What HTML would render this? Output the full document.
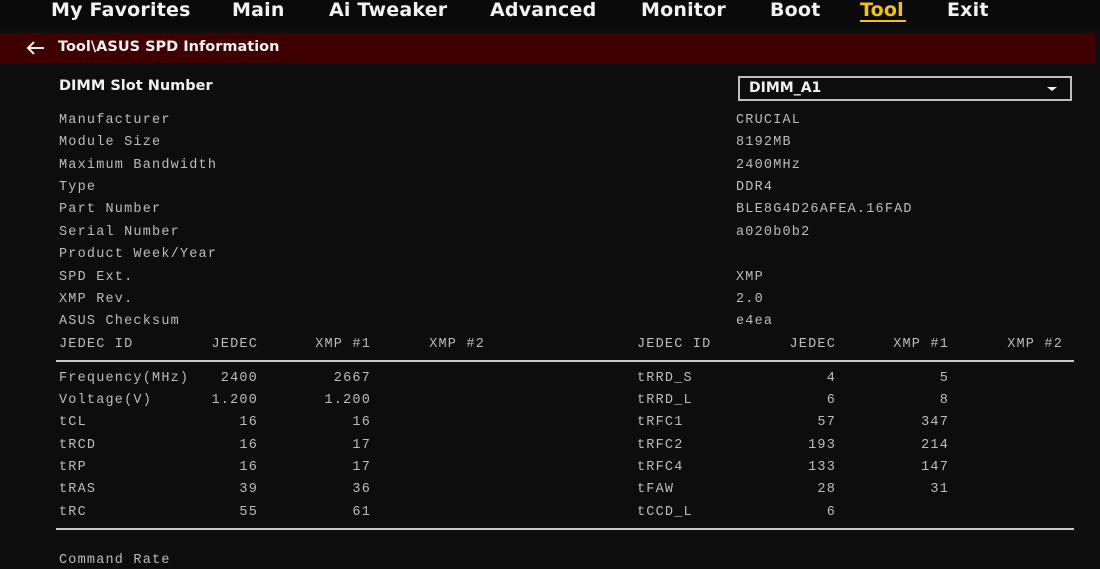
<!DOCTYPE html>
<html><head><meta charset="utf-8"><style>
html,body{margin:0;padding:0;}
body{width:1100px;height:569px;background:#0d0d0d;position:relative;overflow:hidden;font-family:"DejaVu Sans","Liberation Sans",sans-serif;}
.nav{position:absolute;left:0;top:0;width:1100px;height:27px;background:#0a0a0a;}
.nav span{position:absolute;top:-1px;font-size:19px;color:#f2f2f2;font-weight:600;letter-spacing:0.2px;white-space:nowrap;}
.bar{position:absolute;left:0;top:33px;width:1096px;height:30px;background:#3f0000;}
.bar .t{position:absolute;left:58px;top:6px;font-size:14.5px;color:#f0f0f0;font-weight:600;}
.m{position:absolute;font-family:"Liberation Mono",monospace;font-size:13.5px;letter-spacing:1.2px;color:#bcbcbc;white-space:nowrap;line-height:16px;margin-top:1px;}
.r{text-align:right;}
.line{position:absolute;height:2px;background:#c8c8c8;}
</style></head><body>
<div class="nav">
<span style="left:51px">My Favorites</span>
<span style="left:232px">Main</span>
<span style="left:329px">Ai Tweaker</span>
<span style="left:490px">Advanced</span>
<span style="left:641px">Monitor</span>
<span style="left:770px">Boot</span>
<span style="left:860px;color:#f5c400">Tool</span>
<span style="left:947px">Exit</span>
<div style="position:absolute;left:860px;top:20px;width:46px;height:2px;background:#f5c400"></div>
</div>
<div class="bar">
<svg style="position:absolute;left:25px;top:8px" width="20" height="14" viewBox="0 0 20 14"><path d="M19 7H3M9 1L3 7l6 6" stroke="#f0f0f0" stroke-width="2" fill="none"/></svg>
<div class="t">Tool\ASUS SPD Information</div>
</div>
<div style="position:absolute;left:59px;top:78px;font-size:14.5px;color:#f0f0f0;font-weight:600">DIMM Slot Number</div>
<div style="position:absolute;left:738px;top:76px;width:330px;height:21px;border:2px solid #bfbfbf;">
<div style="position:absolute;left:9px;top:2px;font-size:14px;color:#f0f0f0;font-weight:600">DIMM_A1</div>
<div style="position:absolute;right:13px;top:9px;width:0;height:0;border-left:5px solid transparent;border-right:5px solid transparent;border-top:4px solid #f0f0f0"></div>
</div>
<div class="m" style="left:59px;top:112px">Manufacturer</div><div class="m" style="left:736px;top:112px">CRUCIAL</div>
<div class="m" style="left:59px;top:134px">Module Size</div><div class="m" style="left:736px;top:134px">8192MB</div>
<div class="m" style="left:59px;top:157px">Maximum Bandwidth</div><div class="m" style="left:736px;top:157px">2400MHz</div>
<div class="m" style="left:59px;top:179px">Type</div><div class="m" style="left:736px;top:179px">DDR4</div>
<div class="m" style="left:59px;top:201px">Part Number</div><div class="m" style="left:736px;top:201px">BLE8G4D26AFEA.16FAD</div>
<div class="m" style="left:59px;top:224px">Serial Number</div><div class="m" style="left:736px;top:224px">a020b0b2</div>
<div class="m" style="left:59px;top:246px">Product Week/Year</div>
<div class="m" style="left:59px;top:269px">SPD Ext.</div><div class="m" style="left:736px;top:269px">XMP</div>
<div class="m" style="left:59px;top:291px">XMP Rev.</div><div class="m" style="left:736px;top:291px">2.0</div>
<div class="m" style="left:59px;top:313px">ASUS Checksum</div><div class="m" style="left:736px;top:313px">e4ea</div>

<div class="m" style="left:59px;top:336px">JEDEC ID</div>
<div class="m r" style="left:158px;width:100px;top:336px">JEDEC</div>
<div class="m r" style="left:271px;width:100px;top:336px">XMP #1</div>
<div class="m r" style="left:385px;width:100px;top:336px">XMP #2</div>
<div class="m" style="left:637px;top:336px">JEDEC ID</div>
<div class="m r" style="left:736px;width:100px;top:336px">JEDEC</div>
<div class="m r" style="left:849px;width:100px;top:336px">XMP #1</div>
<div class="m r" style="left:963px;width:100px;top:336px">XMP #2</div>
<div class="line" style="left:56px;top:360px;width:1018px"></div>

<div class="m" style="left:59px;top:370px">Frequency(MHz)</div><div class="m r" style="left:158px;width:100px;top:370px">2400</div><div class="m r" style="left:271px;width:100px;top:370px">2667</div>
<div class="m" style="left:59px;top:392px">Voltage(V)</div><div class="m r" style="left:158px;width:100px;top:392px">1.200</div><div class="m r" style="left:271px;width:100px;top:392px">1.200</div>
<div class="m" style="left:59px;top:414px">tCL</div><div class="m r" style="left:158px;width:100px;top:414px">16</div><div class="m r" style="left:271px;width:100px;top:414px">16</div>
<div class="m" style="left:59px;top:437px">tRCD</div><div class="m r" style="left:158px;width:100px;top:437px">16</div><div class="m r" style="left:271px;width:100px;top:437px">17</div>
<div class="m" style="left:59px;top:459px">tRP</div><div class="m r" style="left:158px;width:100px;top:459px">16</div><div class="m r" style="left:271px;width:100px;top:459px">17</div>
<div class="m" style="left:59px;top:481px">tRAS</div><div class="m r" style="left:158px;width:100px;top:481px">39</div><div class="m r" style="left:271px;width:100px;top:481px">36</div>
<div class="m" style="left:59px;top:504px">tRC</div><div class="m r" style="left:158px;width:100px;top:504px">55</div><div class="m r" style="left:271px;width:100px;top:504px">61</div>

<div class="m" style="left:637px;top:370px">tRRD_S</div><div class="m r" style="left:736px;width:100px;top:370px">4</div><div class="m r" style="left:849px;width:100px;top:370px">5</div>
<div class="m" style="left:637px;top:392px">tRRD_L</div><div class="m r" style="left:736px;width:100px;top:392px">6</div><div class="m r" style="left:849px;width:100px;top:392px">8</div>
<div class="m" style="left:637px;top:414px">tRFC1</div><div class="m r" style="left:736px;width:100px;top:414px">57</div><div class="m r" style="left:849px;width:100px;top:414px">347</div>
<div class="m" style="left:637px;top:437px">tRFC2</div><div class="m r" style="left:736px;width:100px;top:437px">193</div><div class="m r" style="left:849px;width:100px;top:437px">214</div>
<div class="m" style="left:637px;top:459px">tRFC4</div><div class="m r" style="left:736px;width:100px;top:459px">133</div><div class="m r" style="left:849px;width:100px;top:459px">147</div>
<div class="m" style="left:637px;top:481px">tFAW</div><div class="m r" style="left:736px;width:100px;top:481px">28</div><div class="m r" style="left:849px;width:100px;top:481px">31</div>
<div class="m" style="left:637px;top:504px">tCCD_L</div><div class="m r" style="left:736px;width:100px;top:504px">6</div>
<div class="line" style="left:56px;top:528px;width:1018px"></div>
<div class="m" style="left:59px;top:552px">Command Rate</div>
</body></html>
